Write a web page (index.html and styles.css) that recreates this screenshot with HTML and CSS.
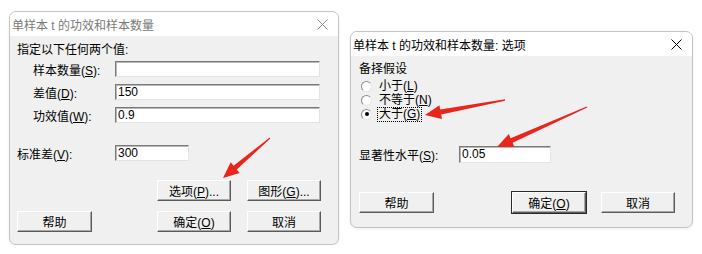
FILE: index.html
```html
<!DOCTYPE html>
<html lang="zh-CN">
<head>
  <meta charset="UTF-8" />
  <title>单样本 t 的功效和样本数量</title>
  <link rel="stylesheet" href="styles.css">
</head>
<body>

<div class="desk">

  <!-- Dialog 1 -->
  <div class="dialog dlg-main inactive">
    <div class="titlebar">
      <span class="title">单样本 t 的功效和样本数量</span>
      <svg class="close" width="11" height="11" viewBox="0 0 11 11"><path d="M0.5 0.5 L10.5 10.5 M10.5 0.5 L0.5 10.5" /></svg>
    </div>
    <div class="body">
      <div class="heading">指定以下任何两个值:</div>
      <div class="row indent">
        <label>样本数量(<u>S</u>):</label>
        <div class="field wide"></div>
      </div>
      <div class="row indent">
        <label>差值(<u>D</u>):</label>
        <div class="field wide">150</div>
      </div>
      <div class="row indent">
        <label>功效值(<u>W</u>):</label>
        <div class="field wide">0.9</div>
      </div>
      <div class="row sd-row">
        <label>标准差(<u>V</u>):</label>
        <div class="field short">300</div>
      </div>
      <div class="btn-row first">
        <span class="spacer"></span>
        <button>选项(<u>P</u>)...</button>
        <button>图形(<u>G</u>)...</button>
      </div>
      <div class="btn-row second">
        <button>帮助</button>
        <span class="spacer"></span>
        <button>确定(<u>O</u>)</button>
        <button>取消</button>
      </div>
    </div>
  </div>

  <!-- Dialog 2 -->
  <div class="dialog dlg-opts">
    <div class="titlebar">
      <span class="title">单样本 t 的功效和样本数量: 选项</span>
      <svg class="close" width="11" height="11" viewBox="0 0 11 11"><path d="M0.5 0.5 L10.5 10.5 M10.5 0.5 L0.5 10.5" /></svg>
    </div>
    <div class="body">
      <div class="heading">备择假设</div>
      <div class="radio"><span class="dot"></span><span class="rlabel">小于(<u>L</u>)</span></div>
      <div class="radio"><span class="dot"></span><span class="rlabel">不等于(<u>N</u>)</span></div>
      <div class="radio checked"><span class="dot"></span><span class="rlabel focus">大于(<u>G</u>)</span></div>
      <div class="row alpha-row">
        <label>显著性水平(<u>S</u>):</label>
        <div class="field alpha">0.05</div>
      </div>
      <div class="btn-row opts">
        <button>帮助</button>
        <span class="spacer"></span>
        <button class="default">确定(<u>O</u>)</button>
        <button>取消</button>
      </div>
    </div>
  </div>

</div>

<!-- red annotation arrows -->
<svg class="arrows" width="702" height="254" viewBox="0 0 702 254">
  <polygon points="270.3,138.4 236.8,169.5 239.7,172.9 223,178 230.7,162.3 233.6,165.7 269.7,137.6" />
  <polygon points="505.1,100.7 441.2,114.6 442.0,119.0 425,115 439.4,105.2 440.2,109.6 504.9,99.3" />
  <polygon points="587.3,107.6 512.6,142.8 514.4,146.9 497,147 508.8,134.1 510.6,138.2 586.7,106.4" />
</svg>

</body>
</html>
```

FILE: styles.css
```css
body {
  margin: 0;
  background-color: #fff;
  font-family: "Liberation Sans", "Noto Sans CJK SC", sans-serif;
  font-size: 12px;
  color: #000;
}
.desk {
  display: flex;
  align-items: flex-start;
  padding: 11px 0 0 9px;
  gap: 11px;
}
.dialog {
  background-color: #f0f0f0;
  border: 1px solid #c4c4c4;
  border-radius: 7px;
  overflow: hidden;
  box-sizing: border-box;
  box-shadow: 0 1px 3px rgba(0,0,0,0.08);
}
.dlg-main {
  width: 330px;
  height: 234px;
}
.dlg-opts {
  width: 343px;
  height: 197px;
  margin-top: 20px;
}
.titlebar {
  background-color: #fff;
  height: 24px;
  display: flex;
  align-items: center;
  padding: 0 10px 0 2px;
}
.title {
  flex: 1;
  font-size: 12px;
  white-space: nowrap;
}
.close path {
  stroke: #000;
  stroke-width: 1;
  fill: none;
}
.inactive .title {
  color: #7a7a7a;
}
.inactive .close path {
  stroke: #8a8a8a;
}

.body {
  padding: 0 17px 0 7px;
}
.heading {
  height: 16px;
  line-height: 16px;
  margin-top: 6px;
}
.row {
  display: flex;
  align-items: center;
  height: 16px;
  margin-top: 7px;
}
.row label {
  white-space: nowrap;
}
.indent {
  padding-left: 16px;
}
.indent label {
  width: 82px;
}
.dlg-main .row:nth-child(2) {
  margin-top: 3px;
}
.sd-row {
  margin-top: 22px;
}
.sd-row label {
  width: 98px;
}
.field {
  box-sizing: border-box;
  height: 16px;
  background-color: #fff;
  border-top: 1px solid #7a7a7a;
  border-left: 1px solid #7a7a7a;
  border-right: 1px solid #e4e4e4;
  border-bottom: 1px solid #e4e4e4;
  box-shadow: inset 1px 1px 0 #b8b8b8;
  padding: 0 2px;
  line-height: 14px;
  font-size: 12px;
}
.wide {
  width: 205px;
}
.short {
  width: 74px;
}
.u {
  text-decoration: underline;
}

.btn-row {
  display: flex;
  gap: 16px;
}
.btn-row .spacer {
  flex: 1;
}
.btn-row.first {
  margin-top: 19px;
}
.btn-row.second {
  margin-top: 10px;
}
button {
  box-sizing: border-box;
  width: 74px;
  height: 21px;
  padding: 0;
  font-family: "Liberation Sans", "Noto Sans CJK SC", sans-serif;
  font-size: 12px;
  color: #000;
  background-color: #f0f0f0;
  border-top: 1px solid #fff;
  border-left: 1px solid #fff;
  border-right: 1px solid #5a5a5a;
  border-bottom: 1px solid #5a5a5a;
  box-shadow: inset -1px -1px 0 #a8a8a8;
}
.btn-row button:first-child {
  width: 75px;
}
button.default {
  outline: 1px solid #2a2a2a;
  outline-offset: 0;
  border-top-color: #fff;
}

/* options dialog */
.dlg-opts .body {
  padding: 0 17px 0 8px;
}
.dlg-opts .heading {
  margin-top: 5px;
}
.radio {
  display: flex;
  align-items: center;
  height: 14px;
  padding-left: 2px;
}
.radio:nth-child(2) {
  margin-top: 2px;
}
.dot {
  box-sizing: border-box;
  width: 11px;
  height: 11px;
  border-radius: 50%;
  background-color: #fff;
  border-top: 1px solid #8c8c8c;
  border-left: 1px solid #8c8c8c;
  border-right: 1px solid #e6e6e6;
  border-bottom: 1px solid #e6e6e6;
  display: flex;
  align-items: center;
  justify-content: center;
  margin-right: 5px;
}
.checked .dot::after {
  content: "";
  width: 4px;
  height: 4px;
  border-radius: 50%;
  background-color: #000;
}
.rlabel {
  line-height: 13px;
  border: 1px dotted transparent;
  padding: 0 1px;
}
.rlabel.focus {
  border-color: #000;
}
.alpha-row {
  margin-top: 25px;
  height: 17px;
}
.alpha-row label {
  width: 100px;
}
.alpha {
  width: 92px;
  height: 17px;
}
.btn-row.opts {
  margin-top: 29px;
}
.btn-row.opts {
  gap: 15px;
}

.arrows {
  position: absolute;
  left: 0;
  top: 0;
  pointer-events: none;
}
.arrows polygon {
  fill: #e8261c;
}
```
